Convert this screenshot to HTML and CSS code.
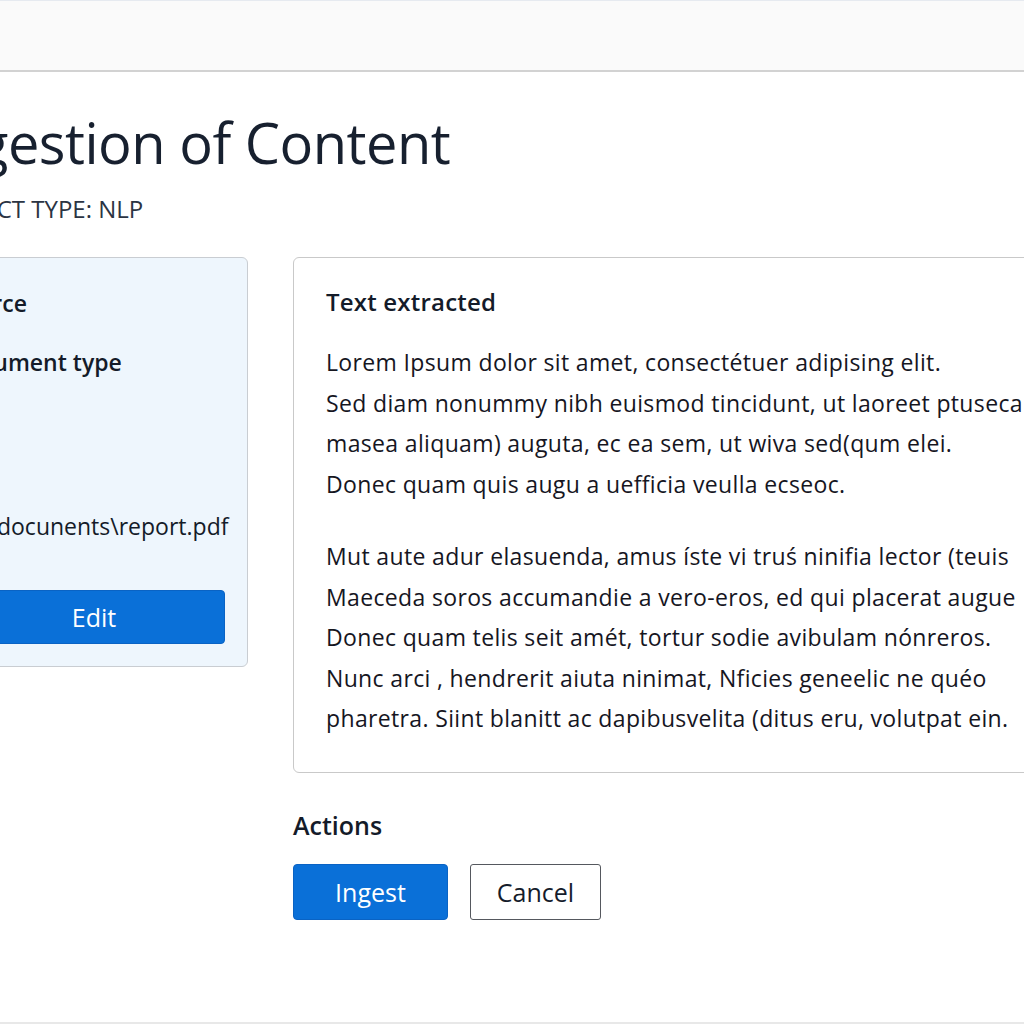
FILE: index.html
```html
<!DOCTYPE html>
<html>
<head>
<meta charset="utf-8">
<link rel="stylesheet" href="styles.css">
</head>
<body>
<header class="topbar"></header>
<main class="page">
  <div class="heading">
    <h1 class="title">Ingestion of Content</h1>
    <p class="subtitle">PROJECT TYPE: NLP</p>
  </div>
  <div class="columns">
    <aside class="source-panel">
      <h2 class="panel-label">Source</h2>
      <h2 class="panel-label doc-type">Document type</h2>
      <p class="path">C:\docunents\report.pdf</p>
      <button class="btn btn-primary btn-edit">Edit</button>
    </aside>
    <section class="right-col">
      <div class="extract-panel">
        <h2 class="extract-title">Text extracted</h2>
        <p class="para">
          <span class="line">Lorem Ipsum dolor sit amet, consectétuer adipising elit.</span>
          <span class="line">Sed diam nonummy nibh euismod tincidunt, ut laoreet ptusecam</span>
          <span class="line">masea aliquam) auguta, ec ea sem, ut wiva sed(qum elei.</span>
          <span class="line">Donec quam quis augu a uefficia veulla ecseoc.</span>
        </p>
        <p class="para">
          <span class="line">Mut aute adur elasuenda, amus íste vi truś ninifia lector (teuis</span>
          <span class="line">Maeceda soros accumandie a vero-eros, ed qui placerat augue</span>
          <span class="line">Donec quam telis seit amét, tortur sodie avibulam nónreros.</span>
          <span class="line">Nunc arci , hendrerit aiuta ninimat, Nficies geneelic ne quéo</span>
          <span class="line">pharetra. Siint blanitt ac dapibusvelita (ditus eru, volutpat ein.</span>
        </p>
      </div>
      <h2 class="actions-title">Actions</h2>
      <div class="actions">
        <button class="btn btn-primary btn-ingest">Ingest</button>
        <button class="btn btn-outline btn-cancel">Cancel</button>
      </div>
    </section>
  </div>
</main>
<footer class="bottom"></footer>
</body>
</html>
```

FILE: styles.css
```css
html, body {
  margin: 0;
  padding: 0;
}
body {
  width: 1024px;
  height: 1024px;
  overflow: hidden;
  background: #ffffff;
  font-family: "Open Sans", "Noto Sans", sans-serif;
  color: #151c2b;
  position: relative;
}
.topbar {
  height: 72px;
  background: #fafafa;
  border-top: 1px solid #e6eaf0;
  border-bottom: 2px solid #d2d2d2;
  box-sizing: border-box;
}
.page {
  margin-left: -60px;
  width: 1200px;
}
.heading {
  margin-left: -11px;
  padding-top: 30px;
}
.title {
  margin: 0;
  font-size: 56px;
  font-weight: 500;
  line-height: 80px;
  color: #17202f;
  letter-spacing: -0.5px;
}
.subtitle {
  margin: 0;
  margin-top: 12px;
  font-size: 24px;
  line-height: 30px;
  color: #2b3443;
}
.columns {
  display: flex;
  align-items: flex-start;
  gap: 45px;
  margin-top: 33px;
}
.source-panel {
  width: 308px;
  height: 410px;
  box-sizing: border-box;
  background: #eef6fd;
  border: 1px solid #c9cdd2;
  border-radius: 6px;
  padding: 30px 22px 0 22px;
  display: flex;
  flex-direction: column;
}
.panel-label {
  margin: 0 0 0 -12px;
  font-size: 23px;
  font-weight: 600;
  line-height: 30px;
  color: #141b29;
}
.doc-type {
  margin-top: 29px;
}
.path {
  margin: 134px 0 0 5px;
  font-size: 23px;
  line-height: 30px;
  color: #141b29;
}
.btn {
  font-family: inherit;
  font-size: 25px;
  cursor: pointer;
  box-sizing: border-box;
}
.btn-primary {
  background: #0a70d8;
  color: #ffffff;
  border: 1px solid #0a63c4;
  border-radius: 4px;
}
.btn-edit {
  margin-top: 49px;
  height: 54px;
  width: 100%;
}
.right-col {
  width: 760px;
}
.extract-panel {
  border: 1px solid #c9c9c9;
  border-radius: 6px;
  height: 516px;
  box-sizing: border-box;
  padding: 28px 32px 0 32px;
}
.extract-title {
  margin: 0;
  font-size: 24px;
  font-weight: 600;
  line-height: 32px;
  letter-spacing: 0.2px;
  color: #141b29;
}
.para {
  margin: 24px 0 0 0;
  font-size: 23px;
  line-height: 40.5px;
  letter-spacing: 0.35px;
  color: #16161f;
}
.para + .para {
  margin-top: 32px;
}
.line {
  display: block;
  white-space: nowrap;
}
.actions-title {
  margin: 36px 0 0 0;
  font-size: 25px;
  font-weight: 600;
  line-height: 32px;
  color: #141b29;
}
.actions {
  display: flex;
  gap: 22px;
  margin-top: 23px;
}
.btn-ingest {
  width: 155px;
  height: 56px;
}
.btn-cancel {
  width: 131px;
  height: 56px;
  background: #ffffff;
  color: #151c2b;
  border: 1.5px solid #55585e;
  border-radius: 3px;
}
.bottom {
  position: absolute;
  left: 0;
  right: 0;
  bottom: 0;
  height: 2px;
  background: #e8e8e8;
}
```
